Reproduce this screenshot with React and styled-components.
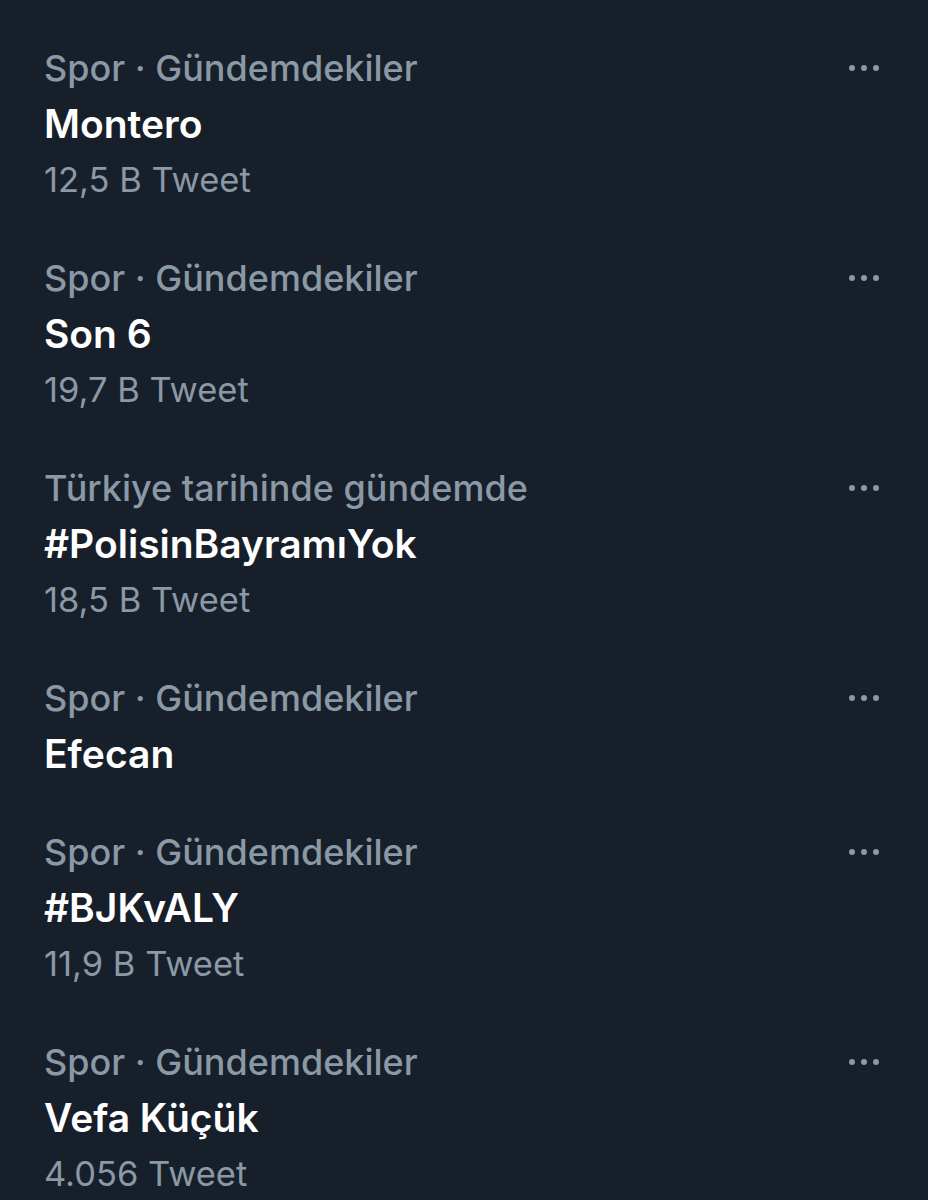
import React from 'react';
import styled, { createGlobalStyle } from 'styled-components';

const GlobalStyle = createGlobalStyle`
  html, body {
    margin: 0;
    background: #17202a;
  }
  body {
    font-family: Inter, "Noto Sans", sans-serif;
    -webkit-font-smoothing: antialiased;
  }
`;

const List = styled.div`
  display: flex;
  flex-direction: column;
  padding-top: 19px;
  min-height: 1200px;
  box-sizing: border-box;
  background: #17202a;
`;

const Row = styled.div`
  display: flex;
  align-items: flex-start;
  justify-content: space-between;
  padding: 21px 45px 21px 44px;
`;

const Body = styled.div`
  display: flex;
  flex-direction: column;
`;

const Category = styled.div`
  color: #8b98a5;
  font-size: 36px;
  font-weight: 500;
  line-height: 56px;
`;

const Title = styled.div`
  color: #ffffff;
  font-size: 39px;
  font-weight: 600;
  line-height: 56px;
`;

const Count = styled.div`
  color: #8b98a5;
  font-size: 34.5px;
  font-weight: 400;
  line-height: 56px;
`;

const More = styled.div`
  display: flex;
  gap: 6px;
  height: 56px;
  align-items: center;
  margin-right: 4px;
`;

const Dot = styled.span`
  width: 6px;
  height: 6px;
  border-radius: 50%;
  background: #8b98a5;
`;

const trends = [
  { category: 'Spor · Gündemdekiler', title: 'Montero', count: '12,5 B Tweet' },
  { category: 'Spor · Gündemdekiler', title: 'Son 6', count: '19,7 B Tweet' },
  { category: 'Türkiye tarihinde gündemde', title: '#PolisinBayramıYok', count: '18,5 B Tweet' },
  { category: 'Spor · Gündemdekiler', title: 'Efecan' },
  { category: 'Spor · Gündemdekiler', title: '#BJKvALY', count: '11,9 B Tweet' },
  { category: 'Spor · Gündemdekiler', title: 'Vefa Küçük', count: '4.056 Tweet' },
];

const App = () => {
  return (
    <>
      <GlobalStyle />
      <List>
        {trends.map((t, i) => (
          <Row key={i}>
            <Body>
              <Category>{t.category}</Category>
              <Title>{t.title}</Title>
              {t.count && <Count>{t.count}</Count>}
            </Body>
            <More>
              <Dot />
              <Dot />
              <Dot />
            </More>
          </Row>
        ))}
      </List>
    </>
  );
};

export default App;
